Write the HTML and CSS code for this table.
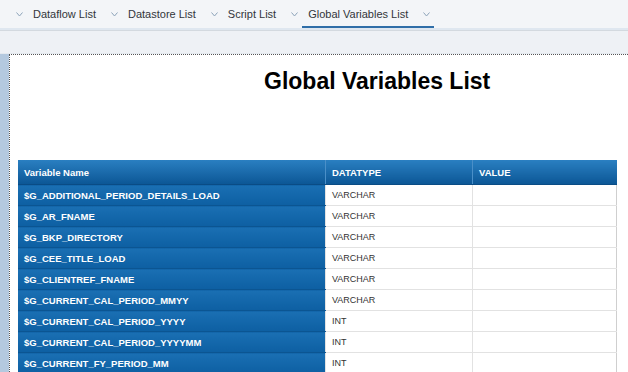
FILE: index.html
```html
<!DOCTYPE html>
<html>
<head>
    <title>Global Variables List</title>
    <link rel="stylesheet" href="styles.css">
</head>
<body>
    <div class="tabbar">
        <span class="tab tab-cut"><svg class="chev" width="7" height="5" viewBox="0 0 7 5"><path d="M0.5 0.5 L3.5 4 L6.5 0.5" /></svg></span>
        <span class="tab">Dataflow List<svg class="chev" width="7" height="5" viewBox="0 0 7 5"><path d="M0.5 0.5 L3.5 4 L6.5 0.5" /></svg></span>
        <span class="tab">Datastore List<svg class="chev" width="7" height="5" viewBox="0 0 7 5"><path d="M0.5 0.5 L3.5 4 L6.5 0.5" /></svg></span>
        <span class="tab">Script List<svg class="chev" width="7" height="5" viewBox="0 0 7 5"><path d="M0.5 0.5 L3.5 4 L6.5 0.5" /></svg></span>
        <span class="tab active">Global Variables List<svg class="chev" width="7" height="5" viewBox="0 0 7 5"><path d="M0.5 0.5 L3.5 4 L6.5 0.5" /></svg></span>
    </div>
    <div class="toolbar"></div>
    <div class="workspace">
        <div class="gutter"></div>
        <div class="doc">
            <h1>Global Variables List</h1>
            <table class="vars">
                <thead>
                    <tr><th>Variable Name</th><th>DATATYPE</th><th>VALUE</th></tr>
                </thead>
                <tbody>
                    <tr><th>$G_ADDITIONAL_PERIOD_DETAILS_LOAD</th><td>VARCHAR</td><td></td></tr>
                    <tr><th>$G_AR_FNAME</th><td>VARCHAR</td><td></td></tr>
                    <tr><th>$G_BKP_DIRECTORY</th><td>VARCHAR</td><td></td></tr>
                    <tr><th>$G_CEE_TITLE_LOAD</th><td>VARCHAR</td><td></td></tr>
                    <tr><th>$G_CLIENTREF_FNAME</th><td>VARCHAR</td><td></td></tr>
                    <tr><th>$G_CURRENT_CAL_PERIOD_MMYY</th><td>VARCHAR</td><td></td></tr>
                    <tr><th>$G_CURRENT_CAL_PERIOD_YYYY</th><td>INT</td><td></td></tr>
                    <tr><th>$G_CURRENT_CAL_PERIOD_YYYYMM</th><td>INT</td><td></td></tr>
                    <tr><th>$G_CURRENT_FY_PERIOD_MM</th><td>INT</td><td></td></tr>
                </tbody>
            </table>
        </div>
    </div>
</body>
</html>
```

FILE: styles.css
```css
body { margin: 0; font-family: "Liberation Sans", Arial, sans-serif; background: #fff; overflow: hidden; }

.tabbar {
    display: flex; height: 28px; background: #f3f5f8;
    border-bottom: 2px solid #dfe7f0;
}
.tab {
    display: flex; align-items: center; height: 28px; box-sizing: border-box;
    padding: 0 4px 0 6px; font-size: 11px; color: #32363a; white-space: nowrap;
}
.tab-cut { padding-left: 16px; padding-right: 4px; }
.tab .chev { margin-left: 15px; }
.tab-cut .chev { margin-left: 0; }
.tab.active { border-bottom: 2px solid #2f6ea8; padding-top: 2px; }
.chev path { fill: none; stroke: #8da3ba; stroke-width: 1; }

.toolbar {
    height: 22px; background: #eef1f5;
    border-top: 1px solid #d3d9df; border-bottom: 1px solid #e4e9ef;
}

.workspace { display: flex; height: 400px; }
.gutter { width: 9px; background: #b4c9df; }
.doc {
    flex: 1; border-top: 1px dotted #555; border-left: 1px dotted #555;
    padding-left: 8px;
}

h1 {
    margin: 13px 0 0; padding-left: 246px;
    font-size: 23px; line-height: 26px; font-weight: bold; color: #000;
}

.vars {
    margin-top: 66px; width: 599px; border-collapse: collapse;
    font-size: 9.5px; table-layout: fixed;
}
.vars th, .vars td {
    text-align: left; padding: 0 6px; white-space: nowrap; overflow: hidden;
}
.vars thead th {
    height: 24px; color: #fff; font-weight: bold;
    background: linear-gradient(#2a7fc1, #0c5796);
    border-left: 1px solid #4a8fc8; border-bottom: 1px solid #0a4c85;
}
.vars thead th:first-child { width: 295px; border-left: none; }
.vars thead th:nth-child(2) { width: 134px; }
.vars tbody th {
    height: 20px; color: #fff; font-weight: bold;
    background: linear-gradient(#1a6fb3, #0d5fa2);
    border-top: 1px solid #2f80c2; border-bottom: 1px solid #0b5592;
}
.vars td {
    height: 20px; color: #333; font-size: 9px;
    border: 1px solid #e2e2e2;
}
.vars td:last-child { border-right: 1px solid #cfcfcf; }
```
